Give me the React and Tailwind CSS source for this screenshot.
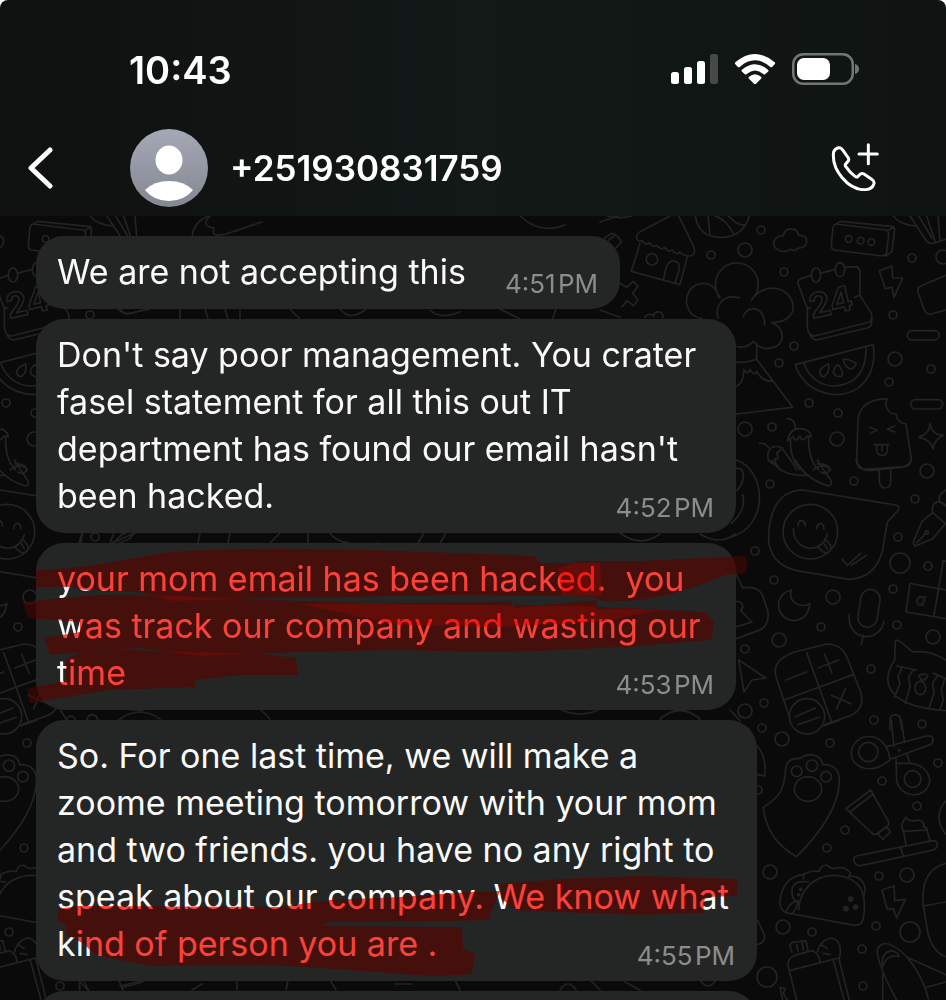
import React from 'react';

const MESSAGES = [
  { id: 1, time: '4:51\u200APM', width: 'min-w-[584px]', lines: ['We are not accepting this'] },
  {
    id: 2,
    time: '4:52\u200APM',
    width: 'min-w-[700px]',
    lines: [
      "Don't say poor management. You crater",
      'fasel statement for all this out IT',
      "department has found our email hasn't",
      'been hacked.'
    ]
  },
  {
    id: 3,
    time: '4:53\u200APM',
    width: 'min-w-[700px]',
    lines: ['your mom email has been hacked.  you', 'was track our company and wasting our', 'time'],
    marker: {
      viewBox: '36 543 720 170',
      strokes: [
        'M36 570C80 570 130 558 170 552C230 547 330 549 400 551L535 556L540 563L600 563L602 596L450 595L350 597L260 598L174 601L140 592L85 590L70 587L36 587Z',
        'M558 568L580 561L640 561L700 558L745 556Q749 564 745 573L725 575C700 586 670 596 640 600L604 602L596 597L562 596Z',
        'M23 602Q60 598 100 595L172 596L300 601L400 604L580 606L705 612L714 622L711 640L640 646L540 651L480 652L400 650L300 652L200 656L140 648L80 652L50 655L44 638L80 632L80 622L28 618Z',
        'M300 604L510 602L515 608L596 600L598 610L630 608L660 610L600 622L500 627L400 625Z',
        'M80 652L120 650L260 654L296 658L298 675L240 675L195 680L195 687L110 690L60 698L30 703L27 689L60 682L66 682L66 660Z'
      ]
    }
  },
  {
    id: 4,
    time: '4:55\u200APM',
    width: 'min-w-[721px]',
    lines: [
      'So. For one last time, we will make a',
      'zoome meeting tomorrow with your mom',
      'and two friends. you have no any right to',
      'speak about our company. We know what',
      'kind of person you are .'
    ],
    marker: {
      viewBox: '36 720 720 260',
      strokes: [
        'M58 909L78 906L280 907L330 900L400 897L470 892L500 891L490 914L489 920L450 921L330 922L320 926L462 927L463 948L475 954L472 974L440 976C400 975 330 967 260 965L150 966L95 955L84 944L66 934L66 924L57 922Z',
        'M501 884L560 879L640 876L738 879L737 896L705 897L703 913L640 915L560 912L515 910L501 898Z'
      ]
    }
  }
];

function Marker({ viewBox, strokes, height }) {
  return (
    <>
      <svg viewBox={viewBox} className={`absolute top-0 left-0 w-[720px] overflow-visible mix-blend-multiply ${height}`} aria-hidden="true">
        {strokes.map(d => <path key={d} d={d} fill="#ff3f38" className="mix-blend-multiply" />)}
      </svg>
      <svg viewBox={viewBox} className={`absolute top-0 left-0 w-[720px] overflow-visible mix-blend-screen ${height}`} aria-hidden="true">
        {strokes.map(d => <path key={d} d={d} fill="#270503" className="mix-blend-screen" />)}
      </svg>
    </>
  );
}

function Bubble({ lines, time, width, marker }) {
  const last = lines[lines.length - 1];

  return (
    <li className={`relative w-fit rounded-[28px] bg-[#242625] pt-3 pr-[22px] pb-[14px] pl-[21px] text-[34px] leading-[47px] text-[#fafafa] ${width}`}>
      {lines.slice(0, -1).map(line => (
        <p key={line} className="whitespace-pre">{line}</p>
      ))}
      <div className="flex items-end justify-between gap-7">
        <p className="whitespace-pre">{last}</p>
        <time className="text-[26px] leading-[22px] text-[#8b8d8c]">{time}</time>
      </div>
      {marker && <Marker {...marker} height={lines.length > 3 ? 'h-[260px]' : 'h-[170px]'} />}
    </li>
  );
}

const DOTS = [
  // x, y, r
  [761, 230, 4], [711, 255, 4], [745, 250, 7], [784, 272, 4], [912, 258, 4], [943, 257, 7],
  [893, 315, 4], [794, 346, 4], [779, 363, 4], [895, 359, 7], [931, 369, 4], [889, 382, 4],
  [809, 403, 4], [838, 413, 4], [745, 429, 7], [772, 427, 4], [837, 439, 7], [770, 484, 4],
  [854, 481, 4], [927, 471, 7], [915, 499, 4], [898, 537, 4], [755, 551, 4], [900, 563, 10],
  [928, 566, 4], [774, 580, 4], [833, 597, 7], [893, 589, 4], [821, 627, 4], [897, 625, 4],
  [779, 640, 7], [933, 637, 7], [745, 649, 4], [871, 669, 4], [764, 703, 4], [745, 711, 7],
  [874, 720, 4], [922, 724, 4], [762, 728, 4], [782, 739, 7], [830, 743, 4], [938, 763, 4],
  [882, 781, 4], [758, 790, 4], [917, 806, 4], [845, 830, 4], [827, 848, 4], [770, 872, 7],
  [879, 876, 4], [907, 875, 7], [783, 927, 7], [812, 932, 4], [876, 926, 4], [910, 932, 10],
  [862, 949, 4], [767, 977, 10], [863, 986, 4]
];

// one tile of the chat wallpaper, the groups are drawn at three times their size
function Doodles() {
  return (
    <g id="doodles">
      <g strokeWidth="1.7">
        {DOTS.map(([x, y, r]) => <circle key={`${x}-${y}`} cx={x} cy={y} r={r} />)}
      </g>
      <g transform="translate(600 210) scale(.3333)">
        <path d="M236 18L282 112Q290 140 262 138Q246 134 240 126Q232 138 216 120Q206 130 194 112Q184 122 170 106Q160 114 148 98Q138 108 126 92Q108 96 110 78Q114 66 130 60L210 18M120 100L94 184L240 224L262 140M190 208L200 168Q214 142 236 160L238 178L226 216" />
        <circle cx="156" cy="148" r="17" />
        <path d="M286 18Q296 84 366 82Q430 80 448 18M324 18L330 72M346 18Q380 30 400 70M386 18Q406 44 436 46M22 18Q60 28 96 18" />
        <path d="M540 122Q514 112 524 90Q534 74 550 78Q556 52 582 58Q594 62 596 76Q622 76 620 96Q618 114 596 114Q584 126 570 118Q556 128 540 122Z" />
        <path d="M708 42Q698 46 698 62L694 108Q694 118 704 120L846 138Q856 138 860 128L866 72Q866 62 856 60ZM708 42L724 34L880 50L884 58L876 124L858 138M862 62L882 52" />
        <circle cx="746" cy="87" r="10" /><circle cx="782" cy="92" r="10" /><circle cx="814" cy="96" r="10" />
        <path d="M360 262A64 64 0 1 1 454 270Q480 234 520 234C570 240 584 276 578 304Q564 336 516 338Q552 354 546 388Q538 414 500 416Q478 414 460 394Q440 416 412 410M418 264C370 250 344 286 354 324M356 262Q348 222 310 220C266 222 254 262 262 290Q272 320 306 326M430 318Q440 296 462 296Q494 302 494 344M470 402V448L578 592L410 612M410 456Q440 460 470 448M410 528Q430 522 432 478Q442 498 450 478Q464 502 470 484Q486 514 518 514" />
        <path d="M594 220Q590 212 604 206L634 196M660 190L706 178M736 172L764 170Q778 170 780 184L780 256L814 310Q820 330 808 336L644 378Q626 378 622 352L622 296L594 220M622 296L632 293M764 262L780 256M816 324L814 344Q812 352 800 354L650 390Q638 390 630 374" />
        <ellipse cx="648" cy="195" rx="14" ry="21" /><ellipse cx="720" cy="179" rx="14" ry="21" />
        <text x="636" y="326" transform="rotate(-13 636 326)" fontSize="102" fontWeight="700">24</text>
        <path d="M838 182L876 168L878 204L908 204L882 262L876 232L856 236Z" />
        <path d="M1038 196L962 228Q950 236 954 246L972 298Q978 314 994 312L1038 300" />
        <rect x="922" y="362" width="96" height="28" rx="14" /><rect x="932" y="569" width="96" height="28" rx="14" />
        <path d="M586 464L820 404Q832 490 772 536C700 578 610 540 586 464ZM612 462Q640 528 706 528Q800 520 798 412M660 490Q656 474 686 462Q690 490 672 500Q662 500 660 490ZM700 486Q704 468 714 464Q732 484 726 498Q706 504 700 486ZM730 448Q746 446 768 460Q766 478 748 476Q734 468 730 448Z" />
        <path d="M862 566C850 590 866 612 888 612Q892 640 918 642L934 746Q934 766 912 770L796 778Q770 778 770 750L774 630Q780 568 862 566ZM808 652L832 660L812 670M884 648L862 658L884 666M822 704H866M830 706Q826 736 848 736Q866 736 862 706M846 706V722" />
        <path d="M990 640Q996 676 1032 676Q1002 688 1000 716Q988 686 956 682Q990 672 990 640Z" />
        <path d="M562 626Q584 624 586 656M562 694Q568 656 598 656Q630 656 634 680L622 678Q606 700 600 678Q586 700 580 680ZM572 692Q568 740 600 780M626 680Q624 750 656 780M478 700Q498 698 506 714M548 714Q512 700 504 730Q500 760 528 762L524 746Q542 750 530 730ZM550 720Q580 760 590 780M530 764L540 780M640 780Q670 756 692 780" />
        <path d="M880 18Q900 44 946 48M930 18L980 94Q990 104 1006 98L1038 88M956 18L996 84M980 18L1006 96M1014 18L1020 90M34 70Q50 70 64 96L48 114M14 84L34 70M26 90L42 78M60 220L80 232L100 214L114 228L98 250L114 270L100 288L82 272L66 290M0 300L60 322M134 322Q150 304 160 320Q162 304 180 306Q192 312 188 324" />
      </g>
      <g transform="translate(730 460) scale(.3333)">
        <path d="M18 0C110 30 120 200 0 232M18 26Q40 20 40 50Q38 76 20 92M38 104Q50 150 4 190" />
        <path d="M126 0Q150 50 236 46M116 0L130 12M196 0Q230 60 296 78Q308 76 302 60Q280 30 262 0M262 12Q296 10 300 30Q290 46 272 36M378 0Q386 30 420 32L510 22Q534 20 544 0M448 28V64Q450 84 466 84Q482 82 482 66V24" />
        <path d="M220 90L490 134Q514 136 504 152L472 186L458 270Q436 356 356 358L200 332Q110 310 116 220Q126 90 220 90Z" />
        <circle cx="241" cy="215" r="82" />
        <path d="M204 198Q206 180 216 182Q226 184 226 198M260 206Q262 190 272 190Q282 194 282 208M190 206C190 270 270 290 292 224M264 262L280 276Q298 284 304 264Q298 246 284 238M282 250L292 266M336 296L352 316L392 280M364 316L410 286" />
        <path d="M648 190L608 236L556 258Q546 250 554 236L576 184L608 158M608 158Q604 124 628 126L648 134M608 158L648 192M648 90Q620 106 630 124L648 138M560 248L588 220" /><circle cx="590" cy="217" r="5" />
        <path d="M184 390C128 402 136 480 192 482Q234 478 240 430Q222 444 196 430Q176 416 184 390Z" />
        <rect x="388" y="388" width="58" height="114" rx="29" transform="rotate(9 417 445)" />
        <path d="M358 464C350 546 450 550 462 484M400 526L394 554M18 342L38 384Q82 376 98 406L114 456Q118 500 84 512L20 536M18 424Q40 424 38 442L32 452L66 486L20 500" />
        <path d="M648 390L540 370L528 456L648 476M640 302L612 466M648 304L638 302" />
        <text x="556" y="434" fontSize="50" fontStyle="italic" transform="rotate(6 556 434)" strokeWidth="3">a</text>
        <path d="M26 600L108 654L66 660L42 696ZM494 600L496 544Q502 538 510 544L548 576Q600 570 648 600M494 600C454 660 460 740 648 752M500 618L560 630M516 622L504 650L510 670L494 712M550 630L536 650L540 680L526 730M610 640L648 656M622 648L608 670L612 700L598 742M644 656L634 690L640 720L630 750M566 646Q590 638 592 648Q588 662 574 660Z" /><ellipse cx="571" cy="684" rx="16" ry="20" />
        <path d="M194 576L290 552Q336 552 352 594L392 696Q406 744 364 766L284 794M194 576Q124 600 138 650L180 776M230 578L304 784M162 720L370 644M168 660L230 636M264 624L326 600M284 582L306 640M304 706L364 732M346 686L320 746M196 770L256 744M204 794L268 772" /><circle cx="231" cy="769" r="53" />
        <path d="M480 810V780Q482 764 496 764Q512 766 512 782L516 810M0 750L30 782" />
      </g>
      <g transform="translate(730 720) scale(.3333)">
        <path d="M280 18L330 0M484 0L492 80M514 0L524 68M470 80L590 48Q610 46 610 60Q608 72 596 76L480 118M480 120C420 170 360 140 364 96C370 36 470 24 480 120ZM498 130L536 130C590 130 604 176 598 190C584 240 510 234 500 182L498 116M532 104L540 130" />
        <circle cx="415" cy="96" r="29" /><circle cx="548" cy="177" r="25" /><circle cx="508" cy="91" r="2" />
        <path d="M166 160Q166 110 210 116Q230 98 260 108Q276 118 278 134C320 132 330 160 328 190Q320 290 200 410Q110 360 100 262C150 230 160 210 166 160Z" />
        <circle cx="200" cy="154" r="16" /><circle cx="246" cy="137" r="17" /><circle cx="288" cy="170" r="16" /><ellipse cx="234" cy="207" rx="41" ry="37" />
        <path d="M348 266L422 210L474 302Q480 314 470 320L440 342Q430 346 422 336ZM360 276L430 222M444 342L468 320L482 336L458 358ZM378 408L608 362Q624 362 622 376Q620 386 610 390L396 436Q376 440 372 422Q370 410 378 408ZM512 384L520 408M528 374L520 332Q508 316 528 292Q534 308 566 300Q588 306 580 320Q594 324 592 334L600 362M520 334Q556 332 592 330" />
        <path d="M220 464Q160 470 150 540Q146 580 190 582L374 616Q396 616 400 596Q412 520 380 490C320 440 210 470 206 570M220 476L222 462Q250 450 268 454Q272 434 292 436Q304 450 320 444Q346 438 362 460L356 470Q394 462 406 506L402 528M236 486Q182 478 186 520Q188 540 204 548M170 572Q180 546 204 542Q200 570 186 580" />
        <g fill="#232323"><circle cx="362" cy="537" r="6" /><circle cx="348" cy="566" r="6" /><circle cx="377" cy="561" r="6" /><circle cx="212" cy="508" r="3" /><circle cx="206" cy="524" r="3" /></g>
        <path d="M456 510L492 498L494 542L526 538L500 594L490 566L472 568ZM648 430Q570 450 580 556L594 640Q610 700 648 710M580 558L648 546M648 242Q606 290 648 344" />
        <path d="M178 752L326 714M178 752Q164 716 200 704L248 692Q274 710 268 728M186 696L180 678Q182 664 196 666L228 662L234 692M200 672L204 694M216 666L220 690M262 696Q274 656 306 654Q340 664 328 716M276 676L292 686M280 700L300 704M178 752L200 840M310 720L342 840M326 714L358 840M82 78Q110 110 104 168L82 164M82 600L104 646Q104 670 82 674" />
        <path d="M500 840Q440 730 442 690Q450 666 476 672C530 690 580 770 596 840M458 740Q450 700 484 692Q504 696 508 710Q470 700 458 740M536 714L648 764M590 802L648 786M458 764V840M150 802L166 806L160 820L172 840M150 802L158 840" />
      </g>
      <path d="M520 216Q540 235 565 225M600 222L618 216M430 310Q440 320 460 312M500 309L520 319M556 309L552 320M620 533Q640 548 660 534M700 534Q720 546 735 534M560 709Q580 719 600 709M660 719Q680 702 700 719M590 980L600 990M625 982L640 990M700 980Q708 992 716 980M560 990Q568 978 576 990" strokeWidth="1.7" />
    </g>
  );
}

function Wallpaper() {
  return (
    <svg className="absolute inset-0 h-full w-full" viewBox="0 216 946 784" preserveAspectRatio="xMinYMin slice" aria-hidden="true">
      <g fill="none" stroke="#232323" strokeWidth="5" strokeLinecap="round" strokeLinejoin="round">
        <Doodles />
        <use href="#doodles" x="-803" />
        <path strokeWidth="1.7" d="M118 309Q124 316 136 312L150 309M180 309V319M205 309L208 319M225 309L228 319M240 309V319M290 309L300 319M340 309Q350 322 366 309M82 533L79 543M112 543L135 533M200 533L198 543M230 533L228 543M270 543L280 533M308 533V543M330 533Q340 548 380 543M418 543L424 533M440 543L446 533M60 709L66 719M120 719Q140 705 160 719M260 709L270 719M78 980L88 990M120 986L142 981M192 990L202 984M237 980V990M288 980L286 990M330 980L336 990M395 984H412M455 980L460 990M192 236Q194 222 208 216M210 216Q200 226 214 228Q210 238 226 234L262 222" />
      </g>
    </svg>
  );
}

function StatusBar() {
  return (
    <div className="flex h-12 items-center justify-between pr-[87px] pl-[129px]">
      <time className="text-[38px] leading-none font-semibold">10:43</time>
      <div className="flex items-center gap-4 pb-[2px]">
        <svg className="h-[30px] w-[47px]" viewBox="0 0 47 30" fill="#fff" aria-label="Signal">
          <rect x="0" y="18" width="8" height="12" rx="2.5" />
          <rect x="13" y="13" width="8" height="17" rx="2.5" />
          <rect x="26" y="7" width="8" height="23" rx="2.5" />
          <rect x="39" y="0" width="8" height="30" rx="2.5" fill="#484a49" />
        </svg>
        <svg className="h-[30px] w-[42px]" viewBox="0 0 126 90" fill="#fff" aria-label="Wi-Fi">
          <path d="M4 25Q63 -25 122 25Q125 28 122 31L115 38Q112 41 108 38Q63 0 18 38Q14 41 11 38L4 31Q1 28 4 25Z" />
          <path d="M24 47Q63 14 102 47Q105 50 102 53L94 60Q91 63 88 60Q63 39 38 60Q35 63 32 60L24 53Q21 50 24 47Z" />
          <path d="M45 68Q63 53 81 68Q84 71 81 74L66 89Q63 92 60 89L45 74Q42 71 45 68Z" />
        </svg>
        <svg className="h-8 w-[67px]" viewBox="0 0 67 32" aria-label="Battery">
          <rect x="1.25" y="1.25" width="59.5" height="29.5" rx="10" fill="none" stroke="#747675" strokeWidth="2.5" />
          <rect x="5" y="5" width="33" height="22" rx="7" fill="#fff" />
          <path d="M63 11Q67 12 67 16Q67 20 63 21Z" fill="#747675" />
        </svg>
      </div>
    </div>
  );
}

function Header() {
  return (
    <header className="rounded-t-lg bg-gradient-to-r from-[#0f1010] via-[#121917] to-[#0f1412] pt-[46px] pb-[9px] text-white">
      <StatusBar />
      <div className="mt-[35px] flex items-center pr-[67px] pl-7">
        <button type="button" aria-label="Back" className="mr-[77px]">
          <svg className="block h-[42px] w-[25px]" viewBox="0 0 25 42" fill="none" stroke="#fff" strokeWidth="5" strokeLinecap="round" strokeLinejoin="round">
            <path d="M22 3L3 21L22 39" />
          </svg>
        </button>
        <svg className="h-[78px] w-[78px]" viewBox="0 0 78 78" aria-hidden="true">
          <defs>
            <linearGradient id="avatar" x1="0" y1="0" x2="0" y2="1">
              <stop offset="0" stopColor="#a5a8b6" />
              <stop offset="1" stopColor="#848891" />
            </linearGradient>
          </defs>
          <circle cx="39" cy="39" r="39" fill="url(#avatar)" />
          <ellipse cx="39" cy="31" rx="13.5" ry="14.5" fill="#fff" />
          <path d="M15 61Q24 52 39 52Q54 52 63 61Q54 72 39 72Q24 72 15 61Z" fill="#fff" />
        </svg>
        <h1 className="ml-[22px] flex-1 text-[35px] leading-none font-semibold">+251930831759</h1>
        <button type="button" aria-label="Add call" className="pb-[2px]">
          <svg className="block h-12 w-12" viewBox="0 0 144 144" fill="none" stroke="#fff" strokeWidth="9" strokeLinecap="round" strokeLinejoin="round">
            <path d="M8 26Q16 12 28 15Q32 17 36 22L50 42Q56 49 51 55L45 62Q41 66 44 70Q56 88 72 100Q77 104 81 100L88 93Q93 90 99 93L122 109Q130 114 129 121Q125 138 104 140C52 142 0 80 8 26Z" />
            <path d="M112 5V62M84 33H139" />
          </svg>
        </button>
      </div>
    </header>
  );
}

export default function App() {
  return (
    <div className="flex h-screen flex-col overflow-hidden bg-white font-['Inter','Liberation_Sans',sans-serif]">
      <Header />
      <main className="relative min-h-0 flex-1 overflow-hidden bg-[#0a0a0a]">
        <Wallpaper />
        <ul className="relative flex flex-col gap-[10px] pt-5 pl-9">
          {MESSAGES.map(({ id, ...message }) => <Bubble key={id} {...message} />)}
          <li className="h-16 w-[721px] rounded-[28px] bg-[#242625]" />
        </ul>
      </main>
    </div>
  );
}
